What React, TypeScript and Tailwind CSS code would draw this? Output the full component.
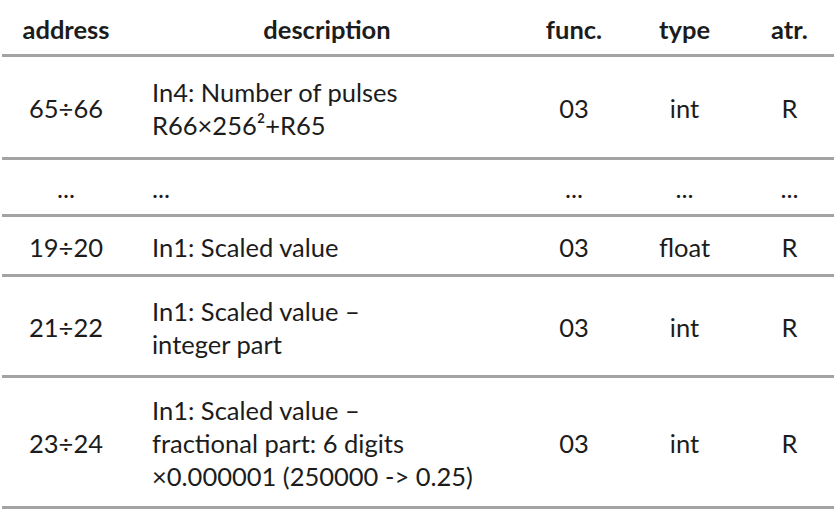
type Row = {
  addr: string;
  desc: string[];
  func: string;
  type: string;
  atr: string;
  h: string;
};

const ROWS: Row[] = [
  { addr: '65÷66', desc: ['In4: Number of pulses', 'R66×256²+R65'], func: '03', type: 'int', atr: 'R', h: 'h-[103px]' },
  { addr: '...', desc: ['...'], func: '...', type: '...', atr: '...', h: 'h-[57px]' },
  { addr: '19÷20', desc: ['In1: Scaled value'], func: '03', type: 'float', atr: 'R', h: 'h-[60px]' },
  { addr: '21÷22', desc: ['In1: Scaled value –', 'integer part'], func: '03', type: 'int', atr: 'R', h: 'h-[101px]' },
  {
    addr: '23÷24',
    desc: ['In1: Scaled value –', 'fractional part: 6 digits', '×0.000001 (250000 -> 0.25)'],
    func: '03',
    type: 'int',
    atr: 'R',
    h: 'h-[131px]',
  },
];

const COLS = 'grid grid-cols-[128px_394px_100px_121px_89px]';

export default function App() {
  return (
    <div className="w-[836px] h-[517px] bg-white font-['Lato','Liberation_Sans',sans-serif] text-[#1c1c1c]">
      <div className="ml-[2px] w-[832px]">
        {/* Header */}
        <div className={`${COLS} h-[57px] pt-[5px] items-center text-[25.5px] font-bold border-b-[3px] border-[#a3a3a3]`}>
          <div className="text-center">address</div>
          <div className="text-center">description</div>
          <div className="text-center">func.</div>
          <div className="text-center">type</div>
          <div className="text-center">atr.</div>
        </div>

        {ROWS.map((r, i) => (
          <div
            key={i}
            className={`${COLS} ${r.h} pt-[3px] items-center text-[25.5px] leading-[33px] border-b-[3px] border-[#a3a3a3]`}
          >
            <div className="text-center">{r.addr}</div>
            <div className="pl-[22px]">
              {r.desc.map((line, j) => (
                <div key={j}>{line}</div>
              ))}
            </div>
            <div className="text-center">{r.func}</div>
            <div className="text-center">{r.type}</div>
            <div className="text-center">{r.atr}</div>
          </div>
        ))}
      </div>
    </div>
  );
}
